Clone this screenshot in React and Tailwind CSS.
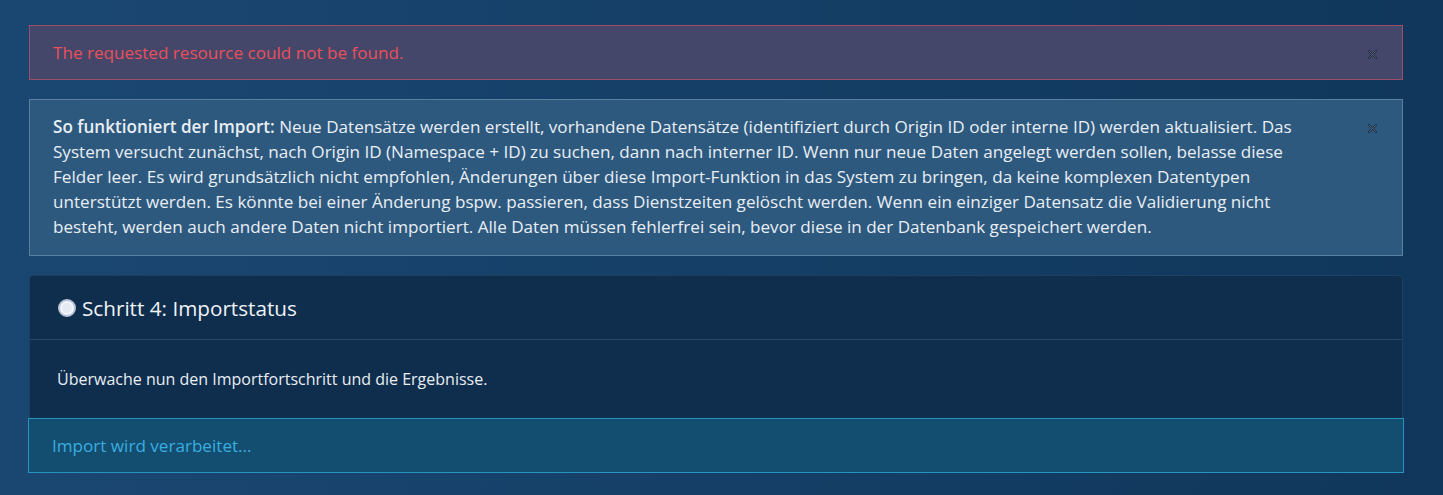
export default function App() {
  return (
    <div
      className="min-h-[495px] bg-gradient-to-r from-[#1a4772] to-[#10375b] pl-[29px] pr-[40px] pt-[25px] pb-6 text-[17.1px] leading-[25px] text-[#e8eef4]"
      style={{ fontFamily: '"Open Sans", "Noto Sans", sans-serif' }}
    >
      {/* Error alert */}
      <div className="relative flex h-[55px] items-center border border-[#9c4d68] bg-[#45476a] pl-[23px] pr-12 text-[#ea4f5b]">
        The requested resource could not be found.
        <CloseX className="absolute right-[25px] top-[24px]" />
      </div>

      {/* Info alert */}
      <div className="relative mt-[19px] border border-[#5b7fa0] bg-[#2e597e] pl-[23px] pr-[72px] pt-[14px] pb-[16px]">
        <p>
          <strong className="font-semibold">So funktioniert der Import:</strong> Neue Datensätze werden erstellt, vorhandene Datensätze (identifiziert durch Origin ID oder interne ID) werden aktualisiert. Das System versucht zunächst, nach Origin ID (Namespace + ID) zu suchen, dann nach interner ID. Wenn nur neue Daten angelegt werden sollen, belasse diese Felder leer. Es wird grundsätzlich nicht empfohlen, Änderungen über diese Import-Funktion in das System zu bringen, da keine komplexen Datentypen unterstützt werden. Es könnte bei einer Änderung bspw. passieren, dass Dienstzeiten gelöscht werden. Wenn ein einziger Datensatz die Validierung nicht besteht, werden auch andere Daten nicht importiert. Alle Daten müssen fehlerfrei sein, bevor diese in der Datenbank gespeichert werden.
        </p>
        <CloseX className="absolute right-[25px] top-[24px]" />
      </div>

      {/* Step card */}
      <div className="mt-[19px] rounded-[4px] border border-[#1f3f5e] bg-[#0f2d4c]">
        <div className="flex h-[64px] items-center gap-[6px] border-b border-[#28486a] px-[28px]">
          <span className="inline-block h-[18px] w-[18px] rounded-full border-2 border-[#b9c6d8] bg-[#e6eaf2] shadow-[inset_0_0_0_2px_#f4f6fa]" />
          <h2 className="text-[20.7px] leading-[28px] text-[#f0f3f7]">Schritt 4: Importstatus</h2>
        </div>
        <div className="flex h-[78px] items-center px-[27px] text-[16px]">
          Überwache nun den Importfortschritt und die Ergebnisse.
        </div>
        <div className="-mx-[2px] -mb-[1px] flex h-[55px] items-center border border-[#2a92bf] bg-[#134d6f] px-[23px] text-[#3aaee0]">
          Import wird verarbeitet...
        </div>
      </div>
    </div>
  );
}

function CloseX({ className }) {
  return (
    <svg className={className} width="9" height="9" viewBox="0 0 9 9" aria-hidden="true">
      <path d="M1 1L8 8M8 1L1 8" stroke="#1c2a3c" strokeWidth="2" strokeLinecap="round" opacity="0.85" />
      <path d="M1 1L8 8M8 1L1 8" stroke="#aab4c4" strokeWidth="0.6" opacity="0.6" />
    </svg>
  );
}
